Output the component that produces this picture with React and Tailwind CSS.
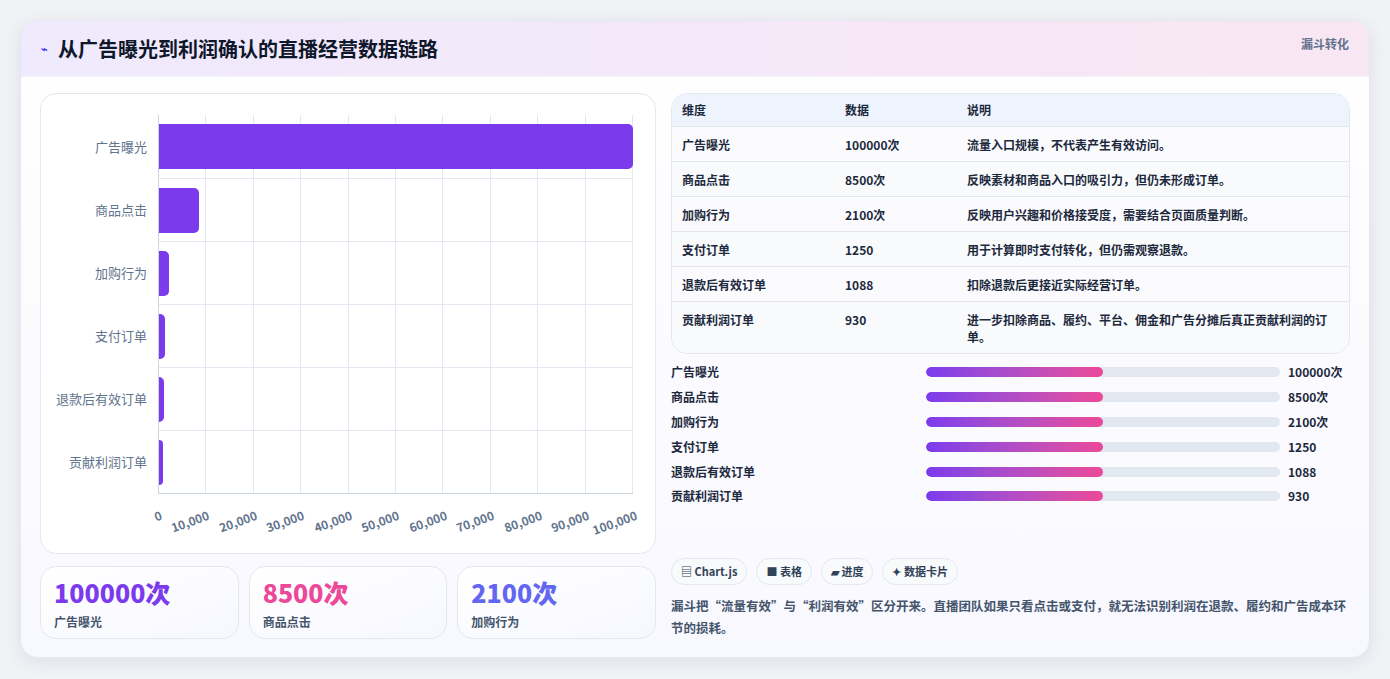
import React from "react";

const rows = [
  { name: "广告曝光", value: 100000, label: "100000次", note: "流量入口规模，不代表产生有效访问。" },
  { name: "商品点击", value: 8500, label: "8500次", note: "反映素材和商品入口的吸引力，但仍未形成订单。" },
  { name: "加购行为", value: 2100, label: "2100次", note: "反映用户兴趣和价格接受度，需要结合页面质量判断。" },
  { name: "支付订单", value: 1250, label: "1250", note: "用于计算即时支付转化，但仍需观察退款。" },
  { name: "退款后有效订单", value: 1088, label: "1088", note: "扣除退款后更接近实际经营订单。" },
  { name: "贡献利润订单", value: 930, label: "930", note: "进一步扣除商品、履约、平台、佣金和广告分摊后真正贡献利润的订单。" },
];

const ticks = ["0", "10,000", "20,000", "30,000", "40,000", "50,000", "60,000", "70,000", "80,000", "90,000", "100,000"];

const BarChart = () => (
  <div className="bg-white border border-slate-200 rounded-2xl h-[461px] pl-[14px] pr-[22px] pt-[21px]">
    <div className="flex">
      <div className="w-[103px] flex flex-col">
        {rows.map((r) => (
          <div key={r.name} className="h-[63px] flex items-center justify-end pr-[11px] text-[13px] text-slate-500">
            {r.name}
          </div>
        ))}
      </div>
      <div className="flex-1 relative border-l border-b border-slate-300">
        {/* grid lines */}
        <div className="absolute inset-0 flex">
          {ticks.slice(1).map((t) => (
            <div key={t} className="flex-1 border-r border-slate-200" />
          ))}
        </div>
        <div className="relative flex flex-col">
          {rows.map((r, i) => (
            <div key={r.name} className={"h-[63px] flex items-center " + (i > 0 ? "border-t border-slate-200" : "")}>
              <div
                className="h-[45px] bg-[#7c3aed] rounded-r-[5px]"
                style={{ width: `${(r.value / 100000) * 100}%`, minWidth: "4px" }}
              />
            </div>
          ))}
        </div>
      </div>
    </div>
    <div className="ml-[103px] relative h-[40px]">
      {ticks.map((t, i) => (
        <span
          key={t}
          className="absolute top-[12px] text-[12px] font-bold text-slate-500 whitespace-nowrap origin-top-right -rotate-[20deg]"
          style={{ right: `${100 - i * 10}%` }}
        >
          {t}
        </span>
      ))}
    </div>
  </div>
);

const StatCard = ({ value, label, color }) => (
  <div className="flex-1 h-[73px] rounded-2xl border border-slate-200 bg-gradient-to-br from-white to-[#f7f8ff] px-[13px] pt-[9px]">
    <div className={"text-[25px] font-extrabold leading-[32px] " + color}>{value}</div>
    <div className="text-[12px] font-bold text-slate-600 mt-[5px]">{label}</div>
  </div>
);

export default function App() {
  return (
    <div className="min-h-screen bg-[#f1f2f6] p-[20px] pb-[21px]" style={{ fontFamily: '"Noto Sans CJK SC", "Liberation Sans", sans-serif' }}>
      <div className="bg-gradient-to-b from-white to-[#f8f8ff] rounded-[18px] shadow-[0_4px_16px_rgba(100,100,140,0.12)] border border-slate-200 overflow-hidden">
        <div className="h-[56px] bg-gradient-to-r from-[#efeafd] to-[#f9e6f3] flex items-center justify-between px-[20px] border-b border-slate-100">
          <h1 className="flex items-center gap-[10px] text-[20px] font-bold text-slate-900">
            <span className="text-[11px] text-indigo-600">⌁</span>
            从广告曝光到利润确认的直播经营数据链路
          </h1>
          <span className="self-start mt-[14px] text-[12px] font-bold text-slate-500">漏斗转化</span>
        </div>
        <div className="flex gap-[15px] px-[19px] pt-[16px] pb-[18px]">
          <div className="w-[616px] flex flex-col gap-[12px]">
            <BarChart />
            <div className="flex gap-[10px]">
              <StatCard value="100000次" label="广告曝光" color="text-[#7c3aed]" />
              <StatCard value="8500次" label="商品点击" color="text-[#ec4899]" />
              <StatCard value="2100次" label="加购行为" color="text-[#6366f1]" />
            </div>
          </div>
          <div className="flex-1 flex flex-col">
            <div className="rounded-2xl border border-slate-200 overflow-hidden bg-white">
              <div className="flex h-[33px] items-center bg-[#eef4fe] text-[12px] font-bold text-slate-800 border-b border-slate-200">
                <div className="w-[173px] pl-[10px]">维度</div>
                <div className="w-[122px]">数据</div>
                <div className="flex-1">说明</div>
              </div>
              {rows.map((r, i) => (
                <div key={r.name} className={"flex text-[12px] font-semibold text-slate-800 pt-[9px] pb-[8px] " + (i % 2 ? "bg-[#f8fafc]" : "bg-[#fbfbfe]") + (i > 0 ? " border-t border-slate-200" : "")}>
                  <div className="w-[173px] pl-[10px] leading-[17px]">{r.name}</div>
                  <div className="w-[122px] leading-[17px]">{r.label}</div>
                  <div className="flex-1 pr-[20px] leading-[17px]">{r.note}</div>
                </div>
              ))}
            </div>
            <div className="mt-[6px] flex flex-col">
              {rows.map((r) => (
                <div key={r.name} className="flex items-center h-[24.8px] text-[12px] font-bold text-slate-800">
                  <div className="w-[255px]">{r.name}</div>
                  <div className="w-[354px] h-[10px] rounded-full bg-slate-200 overflow-hidden">
                    <div className="w-1/2 h-full rounded-full bg-gradient-to-r from-[#7c3aed] to-[#ec4899]" />
                  </div>
                  <div className="pl-[8px]">{r.label}</div>
                </div>
              ))}
            </div>
            <div className="mt-auto flex gap-[9px]">
              {["▤ Chart.js", "■ 表格", "▰ 进度", "✦ 数据卡片"].map((c) => (
                <span key={c} className="px-[9px] h-[27px] flex items-center rounded-full border border-slate-200 bg-[#f8fafc] text-[11px] font-bold text-slate-700">
                  {c}
                </span>
              ))}
            </div>
            <p className="mt-[10px] text-[12.5px] font-semibold text-slate-600 leading-[22px]">
              漏斗把“流量有效”与“利润有效”区分开来。直播团队如果只看点击或支付，就无法识别利润在退款、履约和广告成本环节的损耗。
            </p>
          </div>
        </div>
      </div>
    </div>
  );
}
